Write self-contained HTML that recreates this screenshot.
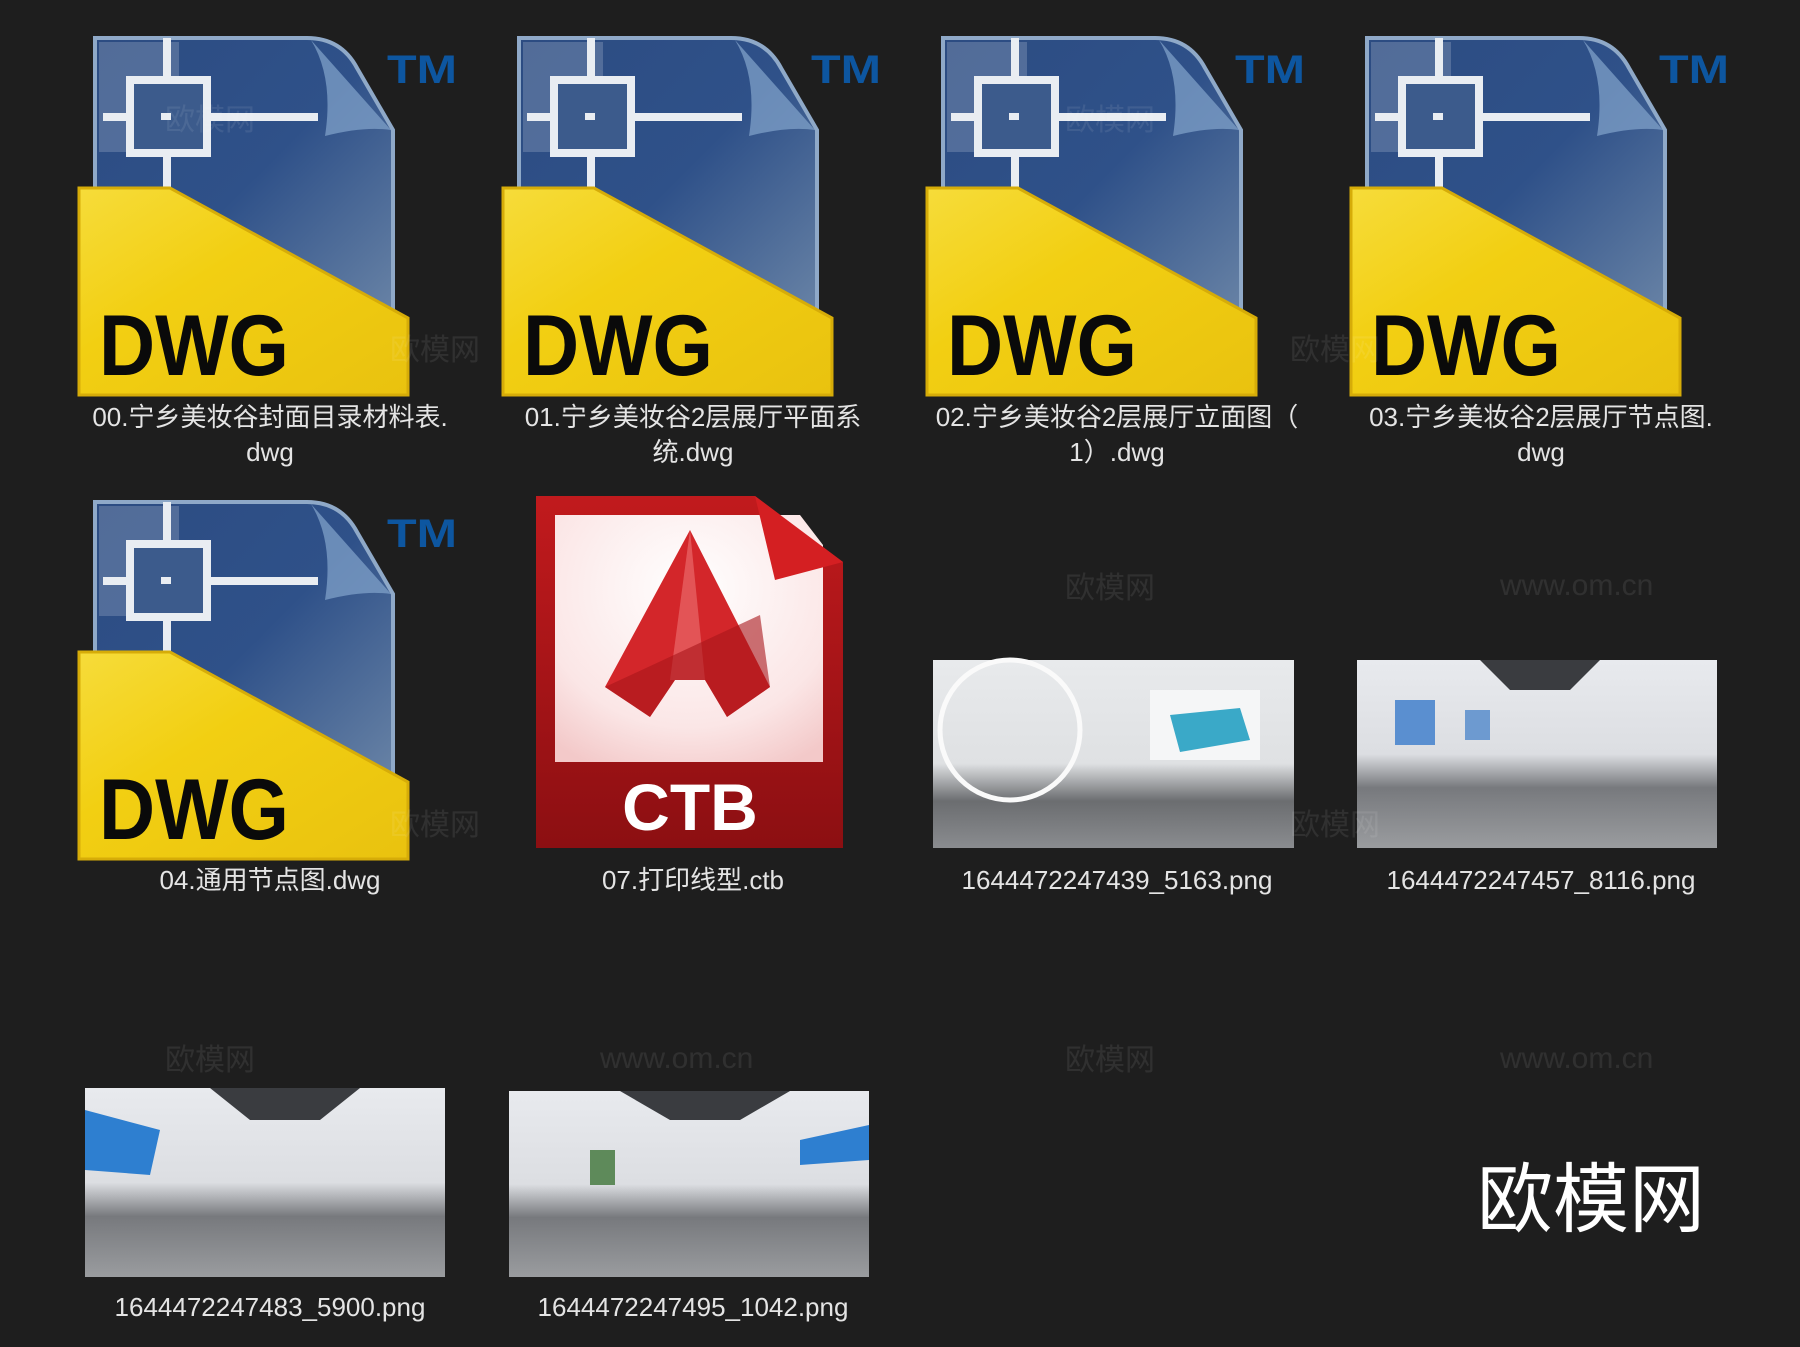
<!DOCTYPE html>
<html><head><meta charset="utf-8"><style>
html,body{margin:0;padding:0;background:#1e1e1e;width:1800px;height:1347px;overflow:hidden}
text{font-family:"Liberation Sans","Noto Sans CJK SC",sans-serif}
</style></head><body>
<svg width="1800" height="1347" viewBox="0 0 1800 1347" xmlns="http://www.w3.org/2000/svg">
<defs>
<linearGradient id="blue" x1="0" y1="0" x2="1" y2="1">
<stop offset="0" stop-color="#2c4c82"/><stop offset="0.5" stop-color="#2f5189"/><stop offset="1" stop-color="#6d87a8"/></linearGradient>
<linearGradient id="yel" x1="0" y1="0" x2="1" y2="1">
<stop offset="0" stop-color="#f6dc3a"/><stop offset="0.4" stop-color="#f2cf12"/><stop offset="1" stop-color="#e9c20f"/></linearGradient>
<linearGradient id="red" x1="0" y1="0" x2="0" y2="1">
<stop offset="0" stop-color="#c11a1d"/><stop offset="1" stop-color="#8c0f12"/></linearGradient>
<radialGradient id="wh" cx="0.5" cy="0.3" r="0.8"><stop offset="0" stop-color="#fff"/><stop offset="0.7" stop-color="#fbe6e6"/><stop offset="1" stop-color="#f3c9c9"/></radialGradient>
<linearGradient id="room1" x1="0" y1="0" x2="0" y2="1"><stop offset="0" stop-color="#e8eaec"/><stop offset="0.55" stop-color="#dfe1e3"/><stop offset="0.75" stop-color="#6b6d70"/><stop offset="1" stop-color="#8a8c8f"/></linearGradient>
<linearGradient id="room2" x1="0" y1="0" x2="0" y2="1"><stop offset="0" stop-color="#e8eaee"/><stop offset="0.5" stop-color="#dcdee2"/><stop offset="0.68" stop-color="#77797d"/><stop offset="1" stop-color="#9a9c9f"/></linearGradient>
<g id="dwg">
<path d="M16 0 H228 Q262 0 278 30 L314 92 V300 H16 Z" fill="url(#blue)" stroke="#8fa9c8" stroke-width="4"/>
<path d="M232 2 Q255 40 246 98 Q285 88 312 92 Z" fill="#7fa0c8" opacity="0.75"/>
<rect x="20" y="4" width="80" height="110" fill="#ffffff" opacity="0.18"/>
<path d="M88 0 V150 M24 79 H239" stroke="#e9edf2" stroke-width="8" fill="none"/>
<rect x="51" y="42" width="77" height="73" fill="#3c5b8c" stroke="#e9edf2" stroke-width="8"/>
<rect x="82" y="75" width="10" height="7" fill="#e9edf2"/>
<path d="M0 150 H91 L329 280 V357 H0 Z" fill="url(#yel)" stroke="#d6ac08" stroke-width="3"/>
<text x="20" y="337" font-size="86" font-weight="bold" fill="#0a0a0a" textLength="190" lengthAdjust="spacingAndGlyphs">DWG</text>
<text x="308" y="45" font-size="40" font-weight="bold" fill="#0d56a0" textLength="70" lengthAdjust="spacingAndGlyphs">TM</text>
</g>
</defs>

<use href="#dwg" x="79" y="38"/>
<use href="#dwg" x="503" y="38"/>
<use href="#dwg" x="927" y="38"/>
<use href="#dwg" x="1351" y="38"/>
<use href="#dwg" x="79" y="502"/>

<g fill="#e4e4e4" font-size="26" text-anchor="middle">
<text x="270" y="426">00.宁乡美妆谷封面目录材料表.</text><text x="270" y="461">dwg</text>
<text x="693" y="426">01.宁乡美妆谷2层展厅平面系</text><text x="693" y="461">统.dwg</text>
<text x="1117" y="426">02.宁乡美妆谷2层展厅立面图（</text><text x="1117" y="461">1）.dwg</text>
<text x="1541" y="426">03.宁乡美妆谷2层展厅节点图.</text><text x="1541" y="461">dwg</text>
<text x="270" y="889">04.通用节点图.dwg</text>
<text x="693" y="889">07.打印线型.ctb</text>
<text x="1117" y="889">1644472247439_5163.png</text>
<text x="1541" y="889">1644472247457_8116.png</text>
<text x="270" y="1316">1644472247483_5900.png</text>
<text x="693" y="1316">1644472247495_1042.png</text>
</g>

<!-- CTB -->
<path d="M536 496 H755 L843 562 V848 H536 Z" fill="url(#red)"/>
<path d="M555 515 H800 L823 545 V762 H555 Z" fill="url(#wh)"/>
<path d="M755 496 L843 562 L775 580 Z" fill="#d41f22"/>
<path d="M690 530 L605 687 L650 717 L675 680 L705 680 L727 717 L770 687 Z" fill="#d3262a"/>
<path d="M690 530 L670 680 L705 680 Z" fill="#e9686a" opacity="0.7"/>
<path d="M605 687 L760 615 L770 687 L727 717 L705 680 L675 680 L650 717 Z" fill="#a8161a" opacity="0.6"/>
<text x="690" y="830" font-size="66" font-weight="bold" fill="#fff" text-anchor="middle">CTB</text>

<!-- thumbnails -->
<rect x="933" y="660" width="361" height="188" fill="url(#room1)"/>
<circle cx="1010" cy="730" r="70" fill="none" stroke="#fafafa" stroke-width="5"/>
<rect x="1150" y="690" width="110" height="70" fill="#f5f6f7"/>
<path d="M1170 715 L1240 708 L1250 740 L1180 752 Z" fill="#3aa9c8"/>
<rect x="1357" y="660" width="360" height="188" fill="url(#room2)"/>
<path d="M1480 660 H1600 L1570 690 H1510 Z" fill="#3a3c40"/>
<rect x="1395" y="700" width="40" height="45" fill="#5a8fd0"/>
<rect x="1465" y="710" width="25" height="30" fill="#6d9ad0"/>

<rect x="85" y="1088" width="360" height="189" fill="url(#room2)"/>
<path d="M210 1088 H360 L320 1120 H250 Z" fill="#3a3c40"/>
<path d="M85 1110 L160 1130 L150 1175 L85 1170 Z" fill="#2e7fd0"/>
<rect x="509" y="1091" width="360" height="186" fill="url(#room2)"/>
<path d="M620 1091 H790 L740 1120 H670 Z" fill="#3a3c40"/>
<path d="M800 1140 L869 1125 L869 1160 L800 1165 Z" fill="#2e7fd0"/>
<rect x="590" y="1150" width="25" height="35" fill="#5e8a5a"/>

<text x="1477" y="1226" font-size="76" fill="#ffffff" font-family="'Noto Sans CJK SC',sans-serif">欧模网</text>

<g fill="#ffffff" opacity="0.08" font-size="30">
<text x="165" y="130">欧模网</text><text x="1065" y="130">欧模网</text><text x="1065" y="598">欧模网</text>
<text x="165" y="1070">欧模网</text><text x="1065" y="1070">欧模网</text><text x="390" y="360">欧模网</text>
<text x="1290" y="360">欧模网</text><text x="390" y="835">欧模网</text><text x="1290" y="835">欧模网</text>
<text x="600" y="1068">www.om.cn</text><text x="1500" y="1068">www.om.cn</text><text x="1500" y="595">www.om.cn</text>
</g>
</svg>
</body></html>
